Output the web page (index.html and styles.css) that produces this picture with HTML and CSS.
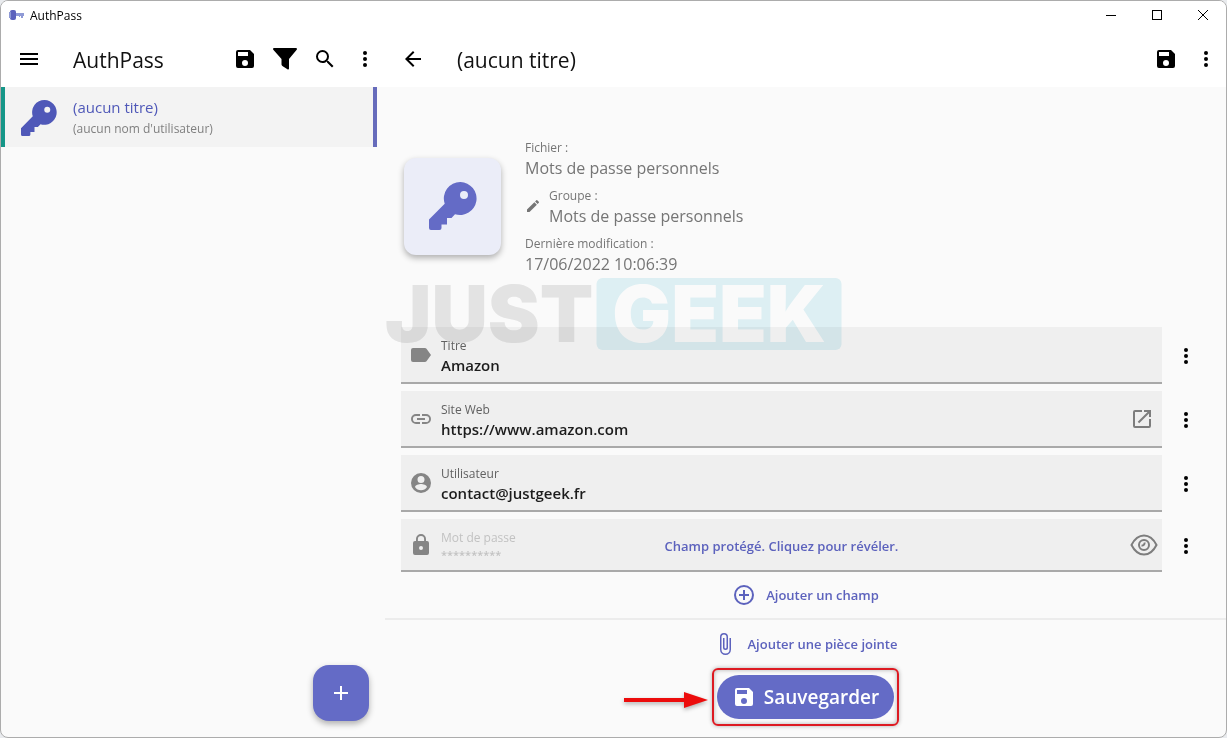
FILE: index.html
```html
<!DOCTYPE html>
<html lang="fr">
<head>
    <meta charset="UTF-8">
    <meta name="viewport" content="width=device-width, initial-scale=1.0">
    <title>AuthPass</title>
    <link rel="stylesheet" href="styles.css">
</head>
<body>
    <!-- Icônes partagées -->
    <svg class="sprite" aria-hidden="true">
        <symbol id="save" viewBox="0 0 24 24"><path d="M17 3H5a2 2 0 0 0-2 2v14a2 2 0 0 0 2 2h14a2 2 0 0 0 2-2V7l-4-4zm-5 16a3 3 0 1 1 0-6 3 3 0 0 1 0 6zm3-10H5V5h10v4z"/></symbol>
        <symbol id="more" viewBox="0 0 24 24"><circle cx="12" cy="6" r="2"/><circle cx="12" cy="12" r="2"/><circle cx="12" cy="18" r="2"/></symbol>
        <symbol id="key" viewBox="0 0 48 48"><path fill-rule="evenodd" d="M31.500 0A16.500 16.500 0 1 1 26 32.200L22.500 36H18v6.500h-5.500V46a2 2 0 0 1-2 2H2a2 2 0 0 1-2-2v-8.500L15.700 21.800A16.500 16.500 0 0 1 31.500 0zM35 9a4 4 0 1 0 0 8 4 4 0 0 0 0-8z"/></symbol>
    </svg>

    <div class="window">
        <header class="titlebar">
            <svg class="app-logo" viewBox="0 0 16 12"><rect x="1" y="0" width="6" height="10" rx="2" fill="#5c62bd"/><path d="M0 2h2v6H0zM7 3h8v3h-1v2h-2V6h-1v1h-1V6H7z" fill="#8f9ad6"/></svg>
            <span class="app-name">AuthPass</span>
            <div class="window-controls">
                <button aria-label="Réduire"><svg viewBox="0 0 12 12"><path d="M1 5.500h10"/></svg></button>
                <button aria-label="Agrandir"><svg viewBox="0 0 12 12"><rect x="1.500" y="0.500" width="9" height="9"/></svg></button>
                <button aria-label="Fermer"><svg viewBox="0 0 12 12"><path d="M1 0l10 10M11 0L1 10"/></svg></button>
            </div>
        </header>

        <div class="panes">
            <aside class="sidebar">
                <div class="appbar">
                    <button class="icon-button nav" aria-label="Menu"><svg viewBox="0 0 24 24"><path d="M3 18h18v-2H3v2zm0-5h18v-2H3v2zm0-7v2h18V6H3z"/></svg></button>
                    <h1 class="title">AuthPass</h1>
                    <button class="icon-button" aria-label="Enregistrer"><svg><use href="#save"/></svg></button>
                    <button class="icon-button" aria-label="Filtrer"><svg viewBox="0 0 24 24"><path d="M1 1h22a1 1 0 0 1 .7 1.700L16 12v9.500a1 1 0 0 1-1.600.8L9.400 19a2 2 0 0 1-.9-1.500V12L.3 2.700A1 1 0 0 1 1 1z"/></svg></button>
                    <button class="icon-button" aria-label="Rechercher"><svg viewBox="0 0 24 24"><path d="M15.500 14h-.79l-.28-.27A6.470 6.470 0 0 0 16 9.500 6.500 6.500 0 1 0 9.500 16c1.610 0 3.090-.59 4.230-1.570l.27.28v.79l5 4.990L20.490 19l-4.990-5zm-6 0a4.500 4.500 0 1 1 0-9 4.500 4.500 0 0 1 0 9z"/></svg></button>
                    <button class="icon-button" aria-label="Plus"><svg><use href="#more"/></svg></button>
                </div>

                <a class="entry" href="#entry">
                    <svg class="entry-key"><use href="#key"/></svg>
                    <span>
                        <span class="entry-title">(aucun titre)</span>
                        <span class="entry-user">(aucun nom d'utilisateur)</span>
                    </span>
                </a>

                <button class="fab" aria-label="Ajouter"><svg viewBox="0 0 24 24"><path d="M19 13h-6v6h-2v-6H5v-2h6V5h2v6h6v2z"/></svg></button>
            </aside>

            <main class="detail" id="entry">
                <div class="appbar">
                    <button class="icon-button nav" aria-label="Retour"><svg viewBox="0 0 24 24"><path d="M20 11H7.830l5.590-5.590L12 4l-8 8 8 8 1.410-1.410L7.830 13H20v-2z"/></svg></button>
                    <h2 class="title">(aucun titre)</h2>
                    <button class="icon-button" aria-label="Enregistrer"><svg><use href="#save"/></svg></button>
                    <button class="icon-button" aria-label="Plus"><svg><use href="#more"/></svg></button>
                </div>

                <div class="content">
                    <section class="summary">
                        <button class="entry-icon" aria-label="Changer l'icône"><svg><use href="#key"/></svg></button>
                        <dl class="meta">
                            <div>
                                <dt>Fichier :</dt>
                                <dd>Mots de passe personnels</dd>
                            </div>
                            <div class="meta-group">
                                <svg viewBox="0 0 24 24"><path d="M3 17.250V21h3.750L17.810 9.940l-3.750-3.750L3 17.250zM20.710 7.040a1 1 0 0 0 0-1.410l-2.340-2.340a1 1 0 0 0-1.410 0l-1.830 1.830 3.750 3.750 1.830-1.830z"/></svg>
                                <div>
                                    <dt>Groupe :</dt>
                                    <dd>Mots de passe personnels</dd>
                                </div>
                            </div>
                            <div>
                                <dt>Dernière modification :</dt>
                                <dd>17/06/2022 10:06:39</dd>
                            </div>
                        </dl>
                    </section>

                    <form class="fields" id="entryForm">
                        <div class="row">
                            <div class="field">
                                <svg class="field-icon" viewBox="0 0 24 24"><path d="M17.500 5.800A2 2 0 0 0 15.800 5H4a2 2 0 0 0-2 2v10a2 2 0 0 0 2 2h11.800a2 2 0 0 0 1.700-.8L22 12l-4.500-6.200z"/></svg>
                                <div class="field-text">
                                    <label for="fieldTitle">Titre</label>
                                    <input type="text" id="fieldTitle" value="Amazon">
                                </div>
                            </div>
                            <button type="button" class="icon-button more" aria-label="Options du titre"><svg><use href="#more"/></svg></button>
                        </div>

                        <div class="row">
                            <div class="field">
                                <svg class="field-icon" viewBox="0 0 24 24"><path d="M3.900 12A3.100 3.100 0 0 1 7 8.900h4V7H7a5 5 0 0 0 0 10h4v-1.900H7A3.100 3.100 0 0 1 3.900 12zM8 13h8v-2H8v2zm9-6h-4v1.900h4a3.100 3.100 0 0 1 0 6.200h-4V17h4a5 5 0 0 0 0-10z"/></svg>
                                <div class="field-text">
                                    <label for="fieldUrl">Site Web</label>
                                    <input type="text" id="fieldUrl" value="https://www.amazon.com">
                                </div>
                                <button type="button" class="field-action" aria-label="Ouvrir le site"><svg viewBox="0 0 24 24"><path d="M19 19H5V5h7V3H5a2 2 0 0 0-2 2v14a2 2 0 0 0 2 2h14a2 2 0 0 0 2-2v-7h-2v7zM14 3v2h3.590l-9.830 9.830 1.410 1.410L19 6.410V10h2V3h-7z"/></svg></button>
                            </div>
                            <button type="button" class="icon-button more" aria-label="Options du site"><svg><use href="#more"/></svg></button>
                        </div>

                        <div class="row">
                            <div class="field">
                                <svg class="field-icon" viewBox="0 0 24 24"><path d="M12 2a10 10 0 1 0 0 20 10 10 0 0 0 0-20zm0 3a3.500 3.500 0 1 1 0 7 3.500 3.500 0 0 1 0-7zm0 14.200A7.200 7.200 0 0 1 6 16c0-2 4-3.100 6-3.100S18 14 18 16a7.200 7.200 0 0 1-6 3.200z"/></svg>
                                <div class="field-text">
                                    <label for="fieldUser">Utilisateur</label>
                                    <input type="text" id="fieldUser" value="contact@justgeek.fr">
                                </div>
                            </div>
                            <button type="button" class="icon-button more" aria-label="Options de l'utilisateur"><svg><use href="#more"/></svg></button>
                        </div>

                        <div class="row">
                            <div class="field protected">
                                <svg class="field-icon" viewBox="0 0 24 24"><path d="M18 8h-1V6A5 5 0 0 0 7 6v2H6a2 2 0 0 0-2 2v10a2 2 0 0 0 2 2h12a2 2 0 0 0 2-2V10a2 2 0 0 0-2-2zm-6 9a2 2 0 1 1 0-4 2 2 0 0 1 0 4zm3.100-9H8.900V6a3.100 3.100 0 0 1 6.200 0v2z"/></svg>
                                <div class="field-text">
                                    <label for="fieldPassword">Mot de passe</label>
                                    <input type="text" id="fieldPassword" value="**********" readonly>
                                </div>
                                <button type="button" class="reveal">Champ protégé. Cliquez pour révéler.</button>
                                <button type="button" class="field-action eye" aria-label="Afficher le mot de passe"><svg viewBox="0 0 28 24"><path d="M1.500 12C5 5 9.500 2.500 14 2.500S23 5 26.500 12C23 19 18.500 21.500 14 21.500S5 19 1.500 12z"/><circle cx="14" cy="12" r="5"/><path d="M14.500 9.500a2.500 2.500 0 0 1-3 3"/></svg></button>
                            </div>
                            <button type="button" class="icon-button more" aria-label="Options du mot de passe"><svg><use href="#more"/></svg></button>
                        </div>
                    </form>
                </div>

                <button class="text-button">
                    <svg viewBox="0 0 24 24"><path d="M13 7h-2v4H7v2h4v4h2v-4h4v-2h-4V7zm-1-5a10 10 0 1 0 0 20 10 10 0 0 0 0-20zm0 18a8 8 0 1 1 0-16 8 8 0 0 1 0 16z"/></svg>
                    Ajouter un champ
                </button>
                <hr>
                <button class="text-button attach">
                    <svg viewBox="0 0 24 24"><path d="M16.500 6v11.500a4 4 0 0 1-8 0V5a2.500 2.500 0 0 1 5 0v10.500a1 1 0 0 1-2 0V6H10v9.500a2.500 2.500 0 0 0 5 0V5a4 4 0 0 0-8 0v12.500a5.500 5.500 0 0 0 11 0V6h-1.500z"/></svg>
                    Ajouter une pièce jointe
                </button>

                <div class="save-area">
                    <button type="submit" form="entryForm" class="save-button"><svg><use href="#save"/></svg>Sauvegarder</button>
                    <!-- Cadre et flèche au-dessus du bouton -->
                    <span class="frame"></span>
                    <svg class="arrow" viewBox="0 0 84 18"><path d="M0 7h60V1l24 8-24 8v-6H0z"/></svg>
                </div>
            </main>
        </div>

        <div class="watermark"><span class="just">JUST</span><span class="geek">GEEK</span></div>
    </div>
</body>
</html>
```
FILE: styles.css
```css
* {
    margin: 0;
    padding: 0;
    box-sizing: border-box;
}

body {
    background: #e9ebee;
    font-family: 'Segoe UI', 'Open Sans', 'Noto Sans', sans-serif;
    color: #000;
}

button,
input {
    font: inherit;
    color: inherit;
    background: none;
    border: none;
    outline: none;
}

button {
    cursor: pointer;
}

svg {
    display: block;
    width: 24px;
    height: 24px;
    flex: none;
    fill: currentColor;
}

.sprite {
    position: absolute;
    width: 0;
    height: 0;
}

.window {
    position: relative;
    display: flex;
    flex-direction: column;
    min-height: 100vh;
    background: #fafafa;
    border: 1px solid #acacac;
    border-radius: 8px;
    overflow: hidden;
}

/* Barre de titre */
.titlebar {
    display: flex;
    align-items: center;
    height: 30px;
    padding-left: 8px;
    background: #fff;
}

.app-logo {
    width: 16px;
    height: 12px;
}

.app-name {
    margin-left: 5px;
    font-size: 12px;
    line-height: 16px;
}

.window-controls {
    display: flex;
    margin-left: auto;
}

.window-controls button {
    width: 46px;
    height: 30px;
    display: flex;
    align-items: center;
    justify-content: center;
}

.window-controls svg {
    width: 12px;
    height: 12px;
    fill: none;
    stroke: #000;
}

.panes {
    flex: 1;
    display: grid;
    grid-template-columns: 384px 1fr;
}

.appbar {
    display: flex;
    align-items: center;
    height: 56px;
    background: #fff;
}

.icon-button {
    display: flex;
    align-items: center;
    justify-content: center;
    width: 40px;
    height: 40px;
}

.nav {
    width: 56px;
}

.title {
    flex: 1;
    padding: 2px 0 0 16px;
    font-size: 21px;
    font-weight: 400;
    color: #111;
}

/* Liste des entrées */
.sidebar {
    display: flex;
    flex-direction: column;
}

.entry {
    display: flex;
    align-items: center;
    gap: 16px;
    height: 60px;
    margin-right: 8px;
    padding: 2px 0 0 16px;
    background: #f3f3f3;
    border-left: 4px solid #159688;
    border-right: 4px solid #666bbb;
    text-decoration: none;
}

.entry-key {
    width: 36px;
    height: 36px;
    color: #4f58b8;
}

.entry-title,
.entry-user {
    display: block;
    line-height: 22px;
}

.entry-title {
    font-size: 15px;
    color: #4f58b8;
}

.entry-user {
    font-size: 12px;
    color: #808080;
}

.fab {
    display: flex;
    align-items: center;
    justify-content: center;
    width: 56px;
    height: 56px;
    margin: auto 16px 16px auto;
    border-radius: 16px;
    background: #646bc6;
    color: #fff;
    box-shadow: 0 3px 6px rgba(0, 0, 0, 0.3);
}

/* Détail */
.detail {
    display: flex;
    flex-direction: column;
}

.content {
    padding: 51px 16px 0;
}

.summary {
    display: flex;
    align-items: center;
    gap: 24px;
    padding-left: 3px;
}

.entry-icon {
    display: flex;
    align-items: center;
    justify-content: center;
    width: 97px;
    height: 97px;
    border-radius: 12px;
    background: #ebedf8;
    color: #646bc6;
    box-shadow: 0 3px 6px rgba(0, 0, 0, 0.3);
}

.entry-icon svg {
    width: 48px;
    height: 48px;
}

.meta {
    display: flex;
    flex-direction: column;
    gap: 8px;
    color: #757575;
}

.meta dt {
    font-size: 12px;
    line-height: 20px;
}

.meta dd {
    font-size: 16px;
    line-height: 20px;
}

.meta-group {
    display: flex;
    align-items: center;
    gap: 8px;
}

.meta-group svg {
    width: 16px;
    height: 16px;
}

.fields {
    display: flex;
    flex-direction: column;
    gap: 7px;
    margin-top: 53px;
}

.row {
    display: flex;
    align-items: center;
}

.field {
    position: relative;
    flex: 1;
    display: flex;
    align-items: center;
    height: 57px;
    padding: 0 8px;
    background: #efefef;
    border-bottom: 2px solid #a9a9a9;
}

.field-icon {
    color: #858585;
}

.field-text {
    flex: 1;
    display: flex;
    flex-direction: column;
    padding: 2px 0 0 8px;
}

.field-text label {
    font-size: 12px;
    line-height: 18px;
    color: #616161;
}

.field-text input {
    height: 20px;
    font-size: 15px;
    font-weight: 600;
    color: #1c1c1c;
}

.field-action {
    color: #7d7d7d;
}

.more {
    width: 48px;
}

.protected {
    height: 53px;
    padding-right: 4px;
}

.protected label {
    color: #c2c2c2;
}

.protected input {
    height: 16px;
    font-size: 11px;
    font-weight: 600;
    color: #c2c2c2;
}

.reveal {
    position: absolute;
    inset: 2px 48px 0;
    font-size: 13px;
    font-weight: 600;
    color: #5c62bd;
}

.eye svg {
    width: 28px;
    height: 24px;
    fill: none;
    stroke: currentColor;
    stroke-width: 2;
}

.text-button {
    display: flex;
    align-items: center;
    justify-content: center;
    gap: 10px;
    height: 46px;
    font-size: 13px;
    font-weight: 600;
    color: #5c62bd;
}

.attach {
    height: 48px;
}

hr {
    border: none;
    border-top: 2px solid #ececec;
}

.save-area {
    position: relative;
    align-self: center;
    margin: 7px 0 18px;
}

.save-button {
    display: flex;
    align-items: center;
    gap: 8px;
    height: 44px;
    padding: 0 15px;
    border-radius: 22px;
    background: #646bc6;
    color: #fff;
    font-size: 19px;
    font-weight: 600;
}

.frame {
    position: absolute;
    inset: -7px -5px;
    border: 2px solid #dd1a22;
    border-radius: 6px;
    box-shadow: 0 0 4px rgba(0, 0, 0, 0.3), inset 0 0 4px rgba(0, 0, 0, 0.3);
    pointer-events: none;
}

.arrow {
    position: absolute;
    right: 100%;
    top: 16px;
    width: 84px;
    height: 18px;
    margin-right: 9px;
    color: #ec0c0c;
    filter: drop-shadow(0 2px 2px rgba(0, 0, 0, 0.3));
}

/* Filigrane */
.watermark {
    position: absolute;
    top: 277px;
    left: 50%;
    transform: translateX(-50%);
    display: flex;
    font-family: Inter, sans-serif;
    font-size: 78px;
    font-weight: 900;
    line-height: 72px;
    mix-blend-mode: multiply;
    pointer-events: none;
}

.just {
    color: #e8e8e8;
}

.geek {
    margin-left: 3px;
    padding: 0 16px;
    border-radius: 6px;
    background: #e2f4f8;
    color: #fff;
}
```
